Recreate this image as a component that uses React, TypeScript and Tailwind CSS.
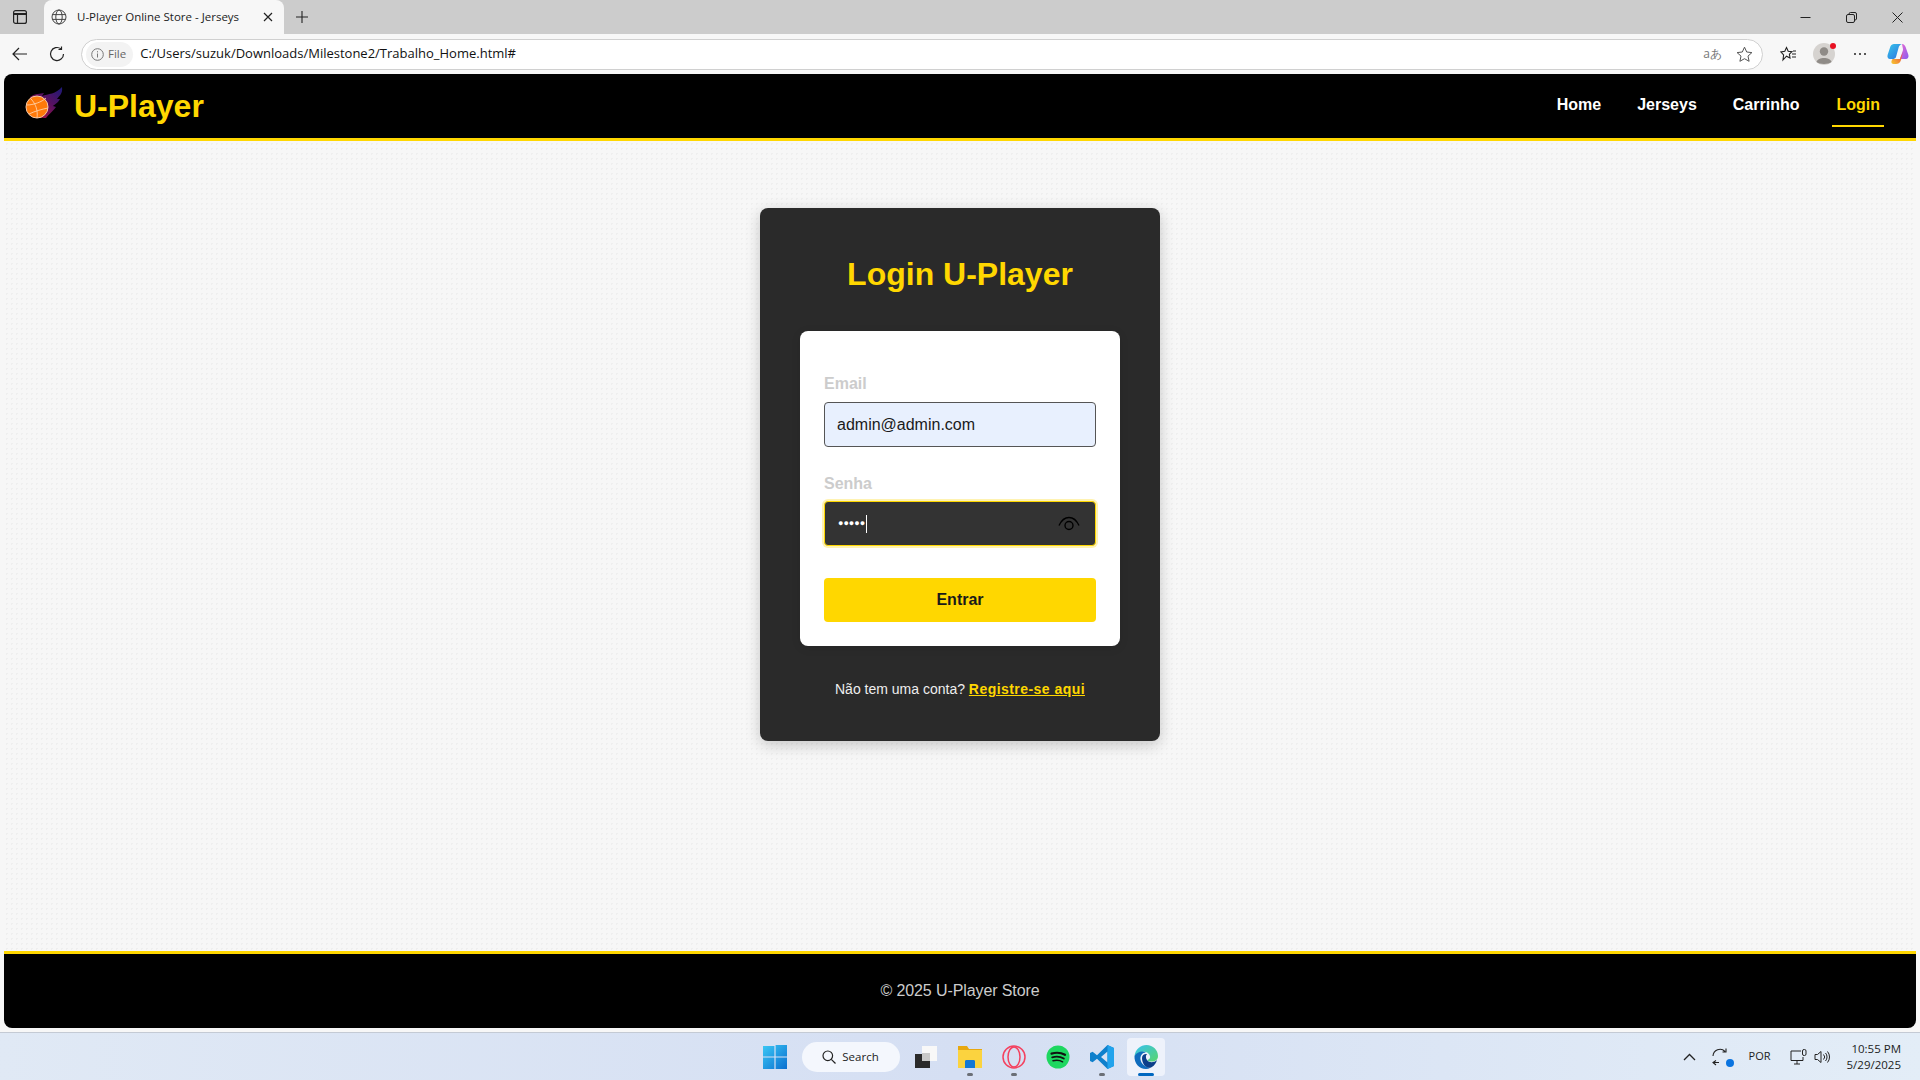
const sans = "font-['Liberation_Sans',Arial,sans-serif]";
const ui = "font-['Open_Sans','Noto_Sans',sans-serif]";

function BallLogo() {
    return (
        <svg width="44" height="38" viewBox="0 0 44 38">
            <defs>
                <linearGradient id="flame" x1="0" y1="1" x2="1" y2="0">
                    <stop offset="0" stopColor="#c0143a" />
                    <stop offset="0.55" stopColor="#5a1160" />
                    <stop offset="1" stopColor="#1b1a78" />
                </linearGradient>
            </defs>
            <path
                d="M10 10 C16 6 20 7 24 6 L22 9 C28 7 36 7 42 0 C43 7 39 9 37 12 L40 12 C38 16 35 17 33 19 L36 20 C33 24 30 26 26 31 C18 32 10 24 10 10 Z"
                fill="url(#flame)"
            />
            <circle cx="17" cy="20" r="11" fill="#ff7a0a" stroke="#f5c9a8" strokeWidth="1" />
            <path
                d="M7 18 C13 18 22 15 26 11 M9 27 C15 24 23 22 28 21 M11 12 C16 17 18 24 17 31"
                fill="none"
                stroke="#ffd9b8"
                strokeWidth="0.8"
            />
        </svg>
    );
}

function EyeIcon() {
    return (
        <svg width="22" height="16" viewBox="0 0 22 16" fill="none" stroke="#000" strokeWidth="1.4">
            <path d="M1 9.5 C4 3 7 1.5 11 1.5 C15 1.5 18 3 21 9.5" />
            <circle cx="11" cy="9.5" r="4" />
        </svg>
    );
}

function BrowserChrome() {
    return (
        <div className={`${ui} shrink-0 text-[#1c1c1c]`}>
            <div className="flex h-[34px] items-end bg-[#cccccc]">
                <div className="flex h-[34px] w-[44px] items-center justify-center pr-[4px]">
                    <svg width="14" height="14" viewBox="0 0 14 14" fill="none" stroke="#222" strokeWidth="1.2">
                        <rect x="0.6" y="0.6" width="12.8" height="12.8" rx="2" />
                        <path d="M0.6 4 H13.4" strokeWidth="2" />
                        <path d="M4.5 4 V13" />
                    </svg>
                </div>
                <div className="flex h-[34px] w-[240px] items-center rounded-t-lg bg-[#f7f7f7] pl-[7px]">
                    <svg width="16" height="16" viewBox="0 0 16 16" fill="none" stroke="#444" strokeWidth="1">
                        <circle cx="8" cy="8" r="7" />
                        <ellipse cx="8" cy="8" rx="3.2" ry="7" />
                        <path d="M1.2 5.6 H14.8 M1.2 10.4 H14.8" />
                    </svg>
                    <span className="ml-[10px] w-[186px] text-[11.5px] whitespace-nowrap">U-Player Online Store - Jerseys</span>
                    <svg width="10" height="10" viewBox="0 0 10 10" stroke="#222" strokeWidth="1.2">
                        <path d="M1 1 L9 9 M9 1 L1 9" />
                    </svg>
                </div>
                <div className="flex h-[34px] w-[36px] items-center justify-center">
                    <svg width="14" height="14" viewBox="0 0 14 14" stroke="#222" strokeWidth="1.1">
                        <path d="M7 1 V13 M1 7 H13" />
                    </svg>
                </div>
                <div className="ml-auto flex h-[34px] items-center gap-[35px] pr-[17px]">
                    <svg width="11" height="11" viewBox="0 0 11 11" stroke="#222" strokeWidth="1">
                        <path d="M0.5 5.5 H10.5" />
                    </svg>
                    <svg width="11" height="11" viewBox="0 0 11 11" fill="none" stroke="#222" strokeWidth="1">
                        <rect x="0.5" y="2.5" width="8" height="8" rx="1.5" />
                        <path d="M3 2.5 V2 A1.5 1.5 0 0 1 4.5 0.5 H9 A1.5 1.5 0 0 1 10.5 2 V7 A1.5 1.5 0 0 1 9 8" />
                    </svg>
                    <svg width="11" height="11" viewBox="0 0 11 11" stroke="#222" strokeWidth="1">
                        <path d="M0.5 0.5 L10.5 10.5 M10.5 0.5 L0.5 10.5" />
                    </svg>
                </div>
            </div>
            <div className="flex h-[40px] items-center bg-[#f7f7f7]">
                <div className="flex w-[38px] justify-center pl-[1px]">
                    <svg width="16" height="14" viewBox="0 0 16 14" fill="none" stroke="#222" strokeWidth="1.2">
                        <path d="M15 7 H1 M7 1 L1 7 L7 13" />
                    </svg>
                </div>
                <div className="flex w-[38px] justify-center">
                    <svg width="16" height="16" viewBox="0 0 16 16" fill="none" stroke="#222" strokeWidth="1.2">
                        <path d="M14.5 8 A6.5 6.5 0 1 1 12 2.9 M12.5 0.5 V3.5 H9.5" />
                    </svg>
                </div>
                <div className="ml-[5px] flex h-[31px] w-[1682px] items-center rounded-full border border-[#d0d0d0] bg-white pl-[4px]">
                    <div className="flex h-[25px] items-center gap-[4px] rounded-full bg-[#f3f3f3] pr-[7px] pl-[5px]">
                        <svg width="13" height="13" viewBox="0 0 13 13" fill="none" stroke="#777" strokeWidth="1">
                            <circle cx="6.5" cy="6.5" r="5.8" />
                            <path d="M6.5 5.5 V9.5 M6.5 3.2 V4.4" />
                        </svg>
                        <span className="text-[11.5px] text-[#666]">File</span>
                    </div>
                    <span className="ml-[7px] text-[13px] text-[#111]">C:/Users/suzuk/Downloads/Milestone2/Trabalho_Home.html#</span>
                    <div className="ml-auto flex items-center gap-[14px] pr-[9px]">
                        <span className="text-[12px] text-[#777]">a&#12354;</span>
                        <svg width="17" height="17" viewBox="0 0 17 17" fill="none" stroke="#555" strokeWidth="1">
                            <path d="M8.5 1.2 L10.7 6 L15.9 6.6 L12 10.1 L13.1 15.3 L8.5 12.7 L3.9 15.3 L5 10.1 L1.1 6.6 L6.3 6 Z" />
                        </svg>
                    </div>
                </div>
                <div className="flex flex-1 items-center pl-[17px]">
                    <svg width="17" height="16" viewBox="0 0 17 16" fill="none" stroke="#222" strokeWidth="1.1">
                        <path d="M6.5 1.5 L8.2 5.2 L12 5.7 L9.4 8.2 L10 12 L6.5 10.2 L3 14 L3.6 9 L1 6 L4.8 5.3 Z" />
                        <path d="M12 8 H16 M12 11 H16 M13 5 H16" />
                    </svg>
                    <div className="relative ml-[16px] flex h-[22px] w-[22px] items-end justify-center overflow-visible rounded-full bg-[#d6d3d0]">
                        <svg width="22" height="22" viewBox="0 0 22 22" fill="#8f8b87">
                            <circle cx="11" cy="8.5" r="4.2" />
                            <path d="M3.5 19 C5 13.8 17 13.8 18.5 19 C16 21.5 6 21.5 3.5 19 Z" />
                        </svg>
                        <span className="absolute top-0 -right-[1px] h-[6px] w-[6px] rounded-full bg-[#e81123]" />
                    </div>
                    <div className="ml-[19px] flex gap-[2px]">
                        <span className="h-[2px] w-[2px] rounded-full bg-[#222]" />
                        <span className="ml-[1px] h-[2px] w-[2px] rounded-full bg-[#222]" />
                        <span className="ml-[1px] h-[2px] w-[2px] rounded-full bg-[#222]" />
                    </div>
                    <svg className="ml-[21px]" width="22" height="22" viewBox="0 0 22 22">
                        <defs>
                            <linearGradient id="cpA" x1="0" y1="0" x2="1" y2="1">
                                <stop offset="0" stopColor="#37c5ea" />
                                <stop offset="1" stopColor="#2b6fe0" />
                            </linearGradient>
                            <linearGradient id="cpB" x1="0" y1="0" x2="1" y2="1">
                                <stop offset="0" stopColor="#e86bd0" />
                                <stop offset="1" stopColor="#8a5cf0" />
                            </linearGradient>
                            <linearGradient id="cpC" x1="0" y1="1" x2="1" y2="0">
                                <stop offset="0" stopColor="#f6cb2e" />
                                <stop offset="0.6" stopColor="#f0703a" />
                                <stop offset="1" stopColor="#e84a70" />
                            </linearGradient>
                        </defs>
                        <path d="M7 1 H15 C13 1.5 12 3 11.5 5 L9 14 C8.5 15.5 7 16 5.5 16 H3 C1 16 0 14 0.6 12 L3.4 3.5 C4 2 5.4 1 7 1 Z" fill="url(#cpA)" />
                        <path d="M15 1 C17 1 18 2.5 18.6 4 L21.4 12 C22 14.5 20.5 16 19 16 H13 L16 7 C16 5 15 2 15 1 Z" fill="url(#cpB)" />
                        <path d="M5.5 16 H13 C13.5 14 15 11 16 9 L14 17 C13 20 11 21 9 21 H6.5 C5 21 4 20 4.5 18 Z" fill="url(#cpC)" />
                    </svg>
                </div>
            </div>
        </div>
    );
}

function Navbar() {
    return (
        <header className="flex h-[67px] shrink-0 items-center rounded-t-lg border-b-[3px] border-[#ffd700] bg-black pr-[32px] pl-[16px]">
            <BallLogo />
            <span className="ml-[10px] text-[32px] font-bold text-[#ffd700]">U-Player</span>
            <nav className="ml-auto flex items-center gap-[28px] text-[16px] font-bold">
                <a className="border-b-2 border-transparent px-[4px] py-[8px] text-white">Home</a>
                <a className="border-b-2 border-transparent px-[4px] py-[8px] text-white">Jerseys</a>
                <a className="border-b-2 border-transparent px-[4px] py-[8px] text-white">Carrinho</a>
                <a className="ml-[1px] border-b-2 border-[#ffd700] px-[4px] py-[8px] text-[#ffd700]">Login</a>
            </nav>
        </header>
    );
}

function LoginCard() {
    return (
        <div className="w-[400px] rounded-lg bg-[#2a2a2a] px-[40px] pt-[48px] pb-[41px] shadow-[0_4px_15px_rgba(0,0,0,0.2)]">
            <h1 className="mb-[38px] text-center text-[32px] leading-[37px] font-bold text-[#ffd700]">Login U-Player</h1>
            <div className="rounded-lg bg-white px-[24px] pt-[44px] pb-[24px] shadow-[0_2px_10px_rgba(0,0,0,0.1)]">
                <label className="mb-[9px] block text-[16px] leading-[18px] font-bold text-[#cccccc]">Email</label>
                <div className="mb-[28px] flex h-[45px] items-center rounded border border-[#555] bg-[#e8f0fe] px-[12px] text-[16px] text-[#1a1a1a]">
                    admin@admin.com
                </div>
                <label className="mb-[8px] block text-[16px] leading-[18px] font-bold text-[#cccccc]">Senha</label>
                <div className="mb-[32px] flex h-[45px] items-center rounded border border-[#ffd700] bg-[#333] pr-[15px] pl-[13px] shadow-[0_0_0_2px_rgba(255,215,0,0.3)]">
                    <span className="text-[9px] text-white">&#9679;&#9679;&#9679;&#9679;&#9679;</span>
                    <span className="ml-[1px] h-[18px] w-px bg-white" />
                    <span className="ml-auto flex">
                        <EyeIcon />
                    </span>
                </div>
                <button className="h-[44px] w-full rounded bg-[#ffd700] text-[16px] font-bold text-[#1a1a1a]">Entrar</button>
            </div>
            <p className="mt-[33px] text-center text-[14px] text-[#eeeeee]">
                Não tem uma conta? <a className="font-bold tracking-[0.45px] text-[#ffd700] underline">Registre-se aqui</a>
            </p>
        </div>
    );
}

function Taskbar() {
    return (
        <div className={`${ui} grid h-[48px] shrink-0 grid-cols-[1fr_auto_1fr] items-center border-t border-[#c4cad4] bg-gradient-to-r from-[#e0e9f5] via-[#d5dff3] to-[#e3edf7] text-[#1c1c1c]`}>
            <div />
            <div className="ml-[7px] flex items-center">
                <svg width="24" height="24" viewBox="0 0 24 24">
                    <defs>
                        <linearGradient id="win" x1="0" y1="0" x2="1" y2="1">
                            <stop offset="0" stopColor="#3bc8f5" />
                            <stop offset="1" stopColor="#0a6fd0" />
                        </linearGradient>
                    </defs>
                    <path d="M0 1 H11.4 V11.4 H0 Z M12.6 0 H24 V11.4 H12.6 Z M0 12.6 H11.4 V24 H0 Z M12.6 12.6 H24 V24 H12.6 Z" fill="url(#win)" />
                </svg>
                <div className="ml-[15px] flex h-[30px] w-[98px] items-center justify-center gap-[6px] rounded-full bg-[#f4f7fd]">
                    <svg width="14" height="14" viewBox="0 0 14 14" fill="none" stroke="#222" strokeWidth="1.2">
                        <circle cx="5.8" cy="5.8" r="4.8" />
                        <path d="M9.3 9.3 L13.5 13.5" />
                    </svg>
                    <span className="text-[11.5px]">Search</span>
                </div>
                <svg className="ml-[14px]" width="24" height="24" viewBox="0 0 24 24">
                    <rect x="8" y="1" width="15" height="15" fill="#f8f8f8" />
                    <rect x="8" y="8" width="8" height="8" fill="#c9c9c9" />
                    <path d="M1 9 H8 V16 H16 V23 H1 Z" fill="#2a2a2a" />
                </svg>
                <div className="relative ml-[20px] h-[24px] w-[24px]">
                    <svg width="24" height="24" viewBox="0 0 24 24">
                        <path d="M0 1 H9 L11 4 H24 V23 H0 Z" fill="#e8a80f" />
                        <path d="M0 5 H24 V23 H0 Z" fill="#fbd33f" />
                        <path d="M7 16 A1.5 1.5 0 0 1 8.5 15 H15.5 A1.5 1.5 0 0 1 17 16 V23 H7 Z" fill="#1478d4" />
                    </svg>
                    <span className="absolute -bottom-[7px] left-[9px] h-[3px] w-[6px] rounded-full bg-[#6b6f76]" />
                </div>
                <div className="relative ml-[20px] h-[24px] w-[24px]">
                    <svg width="24" height="24" viewBox="0 0 24 24" fill="none" stroke="#f4415f" strokeWidth="1.5">
                        <circle cx="12" cy="12" r="11" />
                        <ellipse cx="12" cy="12" rx="6" ry="10" />
                    </svg>
                    <span className="absolute -bottom-[7px] left-[9px] h-[3px] w-[6px] rounded-full bg-[#6b6f76]" />
                </div>
                <svg className="ml-[20px]" width="24" height="24" viewBox="0 0 24 24" fill="none">
                    <circle cx="12" cy="12" r="11.5" fill="#1ed760" />
                    <path d="M5.5 8.6 C10 7.3 15 7.6 19 9.8" stroke="#111" strokeWidth="2.2" strokeLinecap="round" />
                    <path d="M6.2 12.3 C10 11.3 14.5 11.6 17.8 13.5" stroke="#111" strokeWidth="1.9" strokeLinecap="round" />
                    <path d="M7 15.7 C10 15 14 15.2 16.6 16.8" stroke="#111" strokeWidth="1.5" strokeLinecap="round" />
                </svg>
                <div className="relative ml-[20px] h-[24px] w-[24px]">
                    <svg width="24" height="24" viewBox="0 0 24 24">
                        <path d="M17.5 0 L24 3 V21 L17.5 24 L7 13.8 L2.6 17.3 L0 16 V8 L2.6 6.7 L7 10.2 Z M17.5 6.5 L11 12 L17.5 17.5 Z" fill="#0f80cc" fillRule="evenodd" />
                        <path d="M17.5 0 L24 3 V21 L17.5 24 Z" fill="#22a3ec" />
                    </svg>
                    <span className="absolute -bottom-[7px] left-[9px] h-[3px] w-[6px] rounded-full bg-[#6b6f76]" />
                </div>
                <div className="relative ml-[13px] flex h-[38px] w-[38px] items-center justify-center rounded bg-[#eef2fb]">
                    <svg width="24" height="24" viewBox="0 0 24 24">
                        <defs>
                            <linearGradient id="edgeA" x1="0" y1="0" x2="1" y2="1">
                                <stop offset="0" stopColor="#35c1f1" />
                                <stop offset="1" stopColor="#5ad66c" />
                            </linearGradient>
                        </defs>
                        <path d="M0.5 11 C1.5 4 6.5 0 12.5 0 C19 0 24 5 24 11 C24 15 21 16.5 18 16.5 C15.5 16.5 13.5 16 13.5 15 C15.5 14 16.5 13 16 11 C15 7.5 11 6 8 7 C4 8 1.5 10 0.5 11 Z" fill="url(#edgeA)" />
                        <path d="M0.5 11 C3 7 8 5.5 12 7.5 C8 7.5 6 11 6.5 14.5 C7 18.5 11 22.5 16.5 22.8 C15 23.6 13.5 24 12 24 C5 24 0 18 0.5 11 Z" fill="#0f6cbd" />
                        <path d="M8 13 C8 10 10.5 8.5 13 9 C11.5 10.5 11.5 13 13 15 C15 18 20 18 23 15 C21.5 20 18 23 15 22.8 C11 22.5 8 18 8 13 Z" fill="#0c3f8a" />
                    </svg>
                    <span className="absolute bottom-0 left-[11px] h-[3px] w-[16px] rounded-full bg-[#0067c0]" />
                </div>
            </div>
            <div className="flex items-center justify-end pr-[19px]">
                <svg width="13" height="8" viewBox="0 0 13 8" fill="none" stroke="#222" strokeWidth="1.3">
                    <path d="M1 7 L6.5 1.5 L12 7" />
                </svg>
                <div className="relative ml-[16px] h-[18px] w-[18px]">
                    <svg width="18" height="18" viewBox="0 0 18 18" fill="none" stroke="#222" strokeWidth="1.1">
                        <path d="M1 8 A7 7 0 0 1 13 3.5 M14 0.5 V4 H10.5 M4 17 L1 14.5 L4 12.5 M1.5 14.5 H7" />
                    </svg>
                    <span className="absolute right-[-4px] bottom-[-1px] h-[8px] w-[8px] rounded-full bg-[#0a74e0]" />
                </div>
                <span className="ml-[19px] text-[11px]">POR</span>
                <svg className="ml-[19px]" width="17" height="16" viewBox="0 0 17 16" fill="none" stroke="#222" strokeWidth="1">
                    <path d="M11 2 H1 V11.5 H13 V8 M4 15 H10 M7 11.5 V15" />
                    <rect x="12.5" y="0.5" width="3.5" height="6" rx="1.5" />
                </svg>
                <svg className="ml-[7px]" width="16" height="14" viewBox="0 0 16 14" fill="none" stroke="#222" strokeWidth="1">
                    <path d="M1 4.5 H3.5 L7 1.5 V12.5 L3.5 9.5 H1 Z M9.5 4.5 A3.5 3.5 0 0 1 9.5 9.5 M11.5 3 A6 6 0 0 1 11.5 11 M13.5 1.5 A8.5 8.5 0 0 1 13.5 12.5" />
                </svg>
                <div className="ml-[17px] text-right text-[11.5px] leading-[16px]">
                    <div>10:55 PM</div>
                    <div>5/29/2025</div>
                </div>
            </div>
        </div>
    );
}

export default function App() {
    return (
        <div className="flex h-[1080px] w-[1920px] flex-col overflow-hidden bg-[#f7f7f7]">
            <BrowserChrome />
            <div className="h-[958px] shrink-0 px-[4px] pb-[4px]">
                <div className={`${sans} flex h-full flex-col rounded-lg`}>
                    <Navbar />
                    <main className="flex flex-1 justify-center bg-[#f7f7f7] bg-[radial-gradient(#efefef_1px,transparent_1px)] bg-[size:5px_5px] pt-[67px]">
                        <div>
                            <LoginCard />
                        </div>
                    </main>
                    <footer className="flex h-[77px] shrink-0 items-center justify-center rounded-b-lg border-t-[3px] border-[#ffd700] bg-black text-[16px] tracking-[-0.1px] text-[#cccccc]">
                        © 2025 U-Player Store
                    </footer>
                </div>
            </div>
            <Taskbar />
        </div>
    );
}
